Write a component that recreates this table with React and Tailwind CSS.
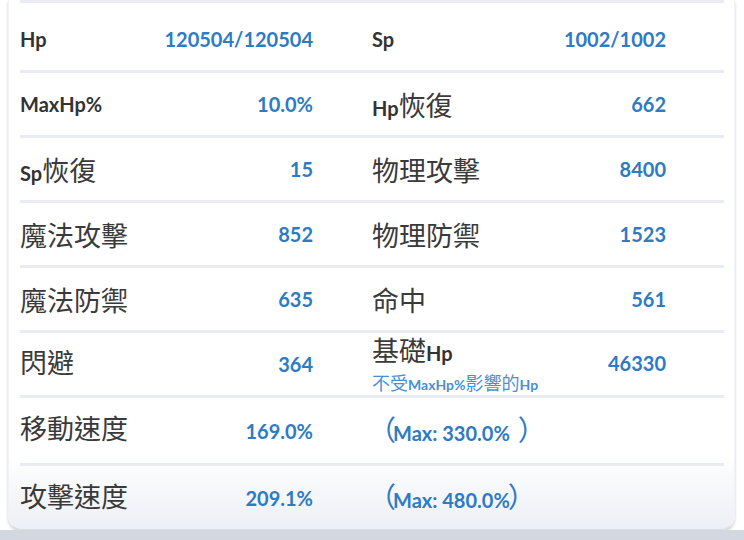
import React from "react";

const L = ({ children }) => (
  <span className="font-['Lato',sans-serif] font-bold text-[20px] text-[#333333] leading-none">{children}</span>
);
const C = ({ children }) => (
  <span className="font-['Noto_Sans_CJK_TC',sans-serif] font-normal text-[27px] text-[#3a3a3a] leading-none">{children}</span>
);
const V = ({ children }) => (
  <span className="font-['Lato',sans-serif] font-bold text-[20px] text-[#2d7bc3] leading-none">{children}</span>
);

const Cell = ({ label, value, right, up }) => (
  <div className={`flex items-center justify-between ${right ? "pr-[58px]" : "pr-[59px]"}`}>
    <div className={`flex items-baseline ${up ? "-mt-[6px]" : ""}`}>{label}</div>
    {value !== undefined && <V>{value}</V>}
  </div>
);

const Row = ({ h, extra = "", children }) => (
  <div className={`grid grid-cols-2 border-t-[3px] border-[#eaecf4] ${h} ${extra}`}>{children}</div>
);

const P = ({ children }) => (
  <span className="font-['Noto_Sans_CJK_TC',sans-serif] font-normal text-[28px] text-[#2d7bc3] leading-none">{children}</span>
);

const MaxNote = ({ value, space }) => (
  <div className="flex items-center">
    <div className="flex items-baseline whitespace-pre">
      <span className="-ml-[4px]"><P>（</P></span>
      <span className="font-['Lato',sans-serif] font-bold text-[20px] text-[#2d7bc3] leading-none -ml-[3px]">
        {`Max: ${value}${space ? " " : ""}`}
      </span>
      <span className={space ? "ml-[3px]" : "-ml-[2px]"}>
        <P>）</P>
      </span>
    </div>
  </div>
);

export default function App() {
  return (
    <div className="w-[744px] h-[540px] bg-white overflow-hidden flex flex-col">
      <div className="mx-[8px] w-[727px] h-[530px] rounded-b-[14px] bg-gradient-to-b from-white from-[86%] to-[#eceff5] border-x border-b border-x-[#f1f2f6] border-b-[#d9dce3] shadow-[0_2px_3px_rgba(0,0,0,0.2)] pl-[11px] pr-[10px]">
        <Row h="h-[70px]" extra="pt-[4px]">
          <Cell label={<L>Hp</L>} value="120504/120504" />
          <Cell right label={<L>Sp</L>} value="1002/1002" />
        </Row>
        <Row h="h-[65px]">
          <Cell label={<L>MaxHp%</L>} value="10.0%" />
          <Cell right label={<><L>Hp</L><C>恢復</C></>} value="662" />
        </Row>
        <Row h="h-[65px]">
          <Cell label={<><L>Sp</L><C>恢復</C></>} value="15" />
          <Cell right label={<C>物理攻擊</C>} value="8400" />
        </Row>
        <Row h="h-[65px]">
          <Cell label={<C>魔法攻擊</C>} value="852" />
          <Cell right label={<C>物理防禦</C>} value="1523" />
        </Row>
        <Row h="h-[65px]">
          <Cell label={<C>魔法防禦</C>} value="635" />
          <Cell right label={<C>命中</C>} value="561" />
        </Row>
        <Row h="h-[65px]">
          <Cell label={<C>閃避</C>} value="364" up />
          <div className="flex items-center justify-between pr-[58px]">
            <div className="flex flex-col gap-[10px] -mt-[1px]">
              <div className="flex items-baseline">
                <C>基礎</C>
                <L>Hp</L>
              </div>
              <div className="flex items-baseline text-[#4a8fd6] leading-none">
                <span className="font-['Noto_Sans_CJK_TC',sans-serif] text-[18px]">不受</span>
                <span className="font-['Lato',sans-serif] font-bold text-[14px]">MaxHp%</span>
                <span className="font-['Noto_Sans_CJK_TC',sans-serif] text-[18px]">影響的</span>
                <span className="font-['Lato',sans-serif] font-bold text-[14px]">Hp</span>
              </div>
            </div>
            <span className="pt-[2px]"><V>46330</V></span>
          </div>
        </Row>
        <Row h="h-[68px]">
          <Cell label={<C>移動速度</C>} value="169.0%" up />
          <MaxNote value="330.0%" space />
        </Row>
        <Row h="h-[67px]">
          <Cell label={<C>攻擊速度</C>} value="209.1%" up />
          <MaxNote value="480.0%" />
        </Row>
      </div>
      <div className="flex-1 bg-[#d3d7df]" />
    </div>
  );
}
